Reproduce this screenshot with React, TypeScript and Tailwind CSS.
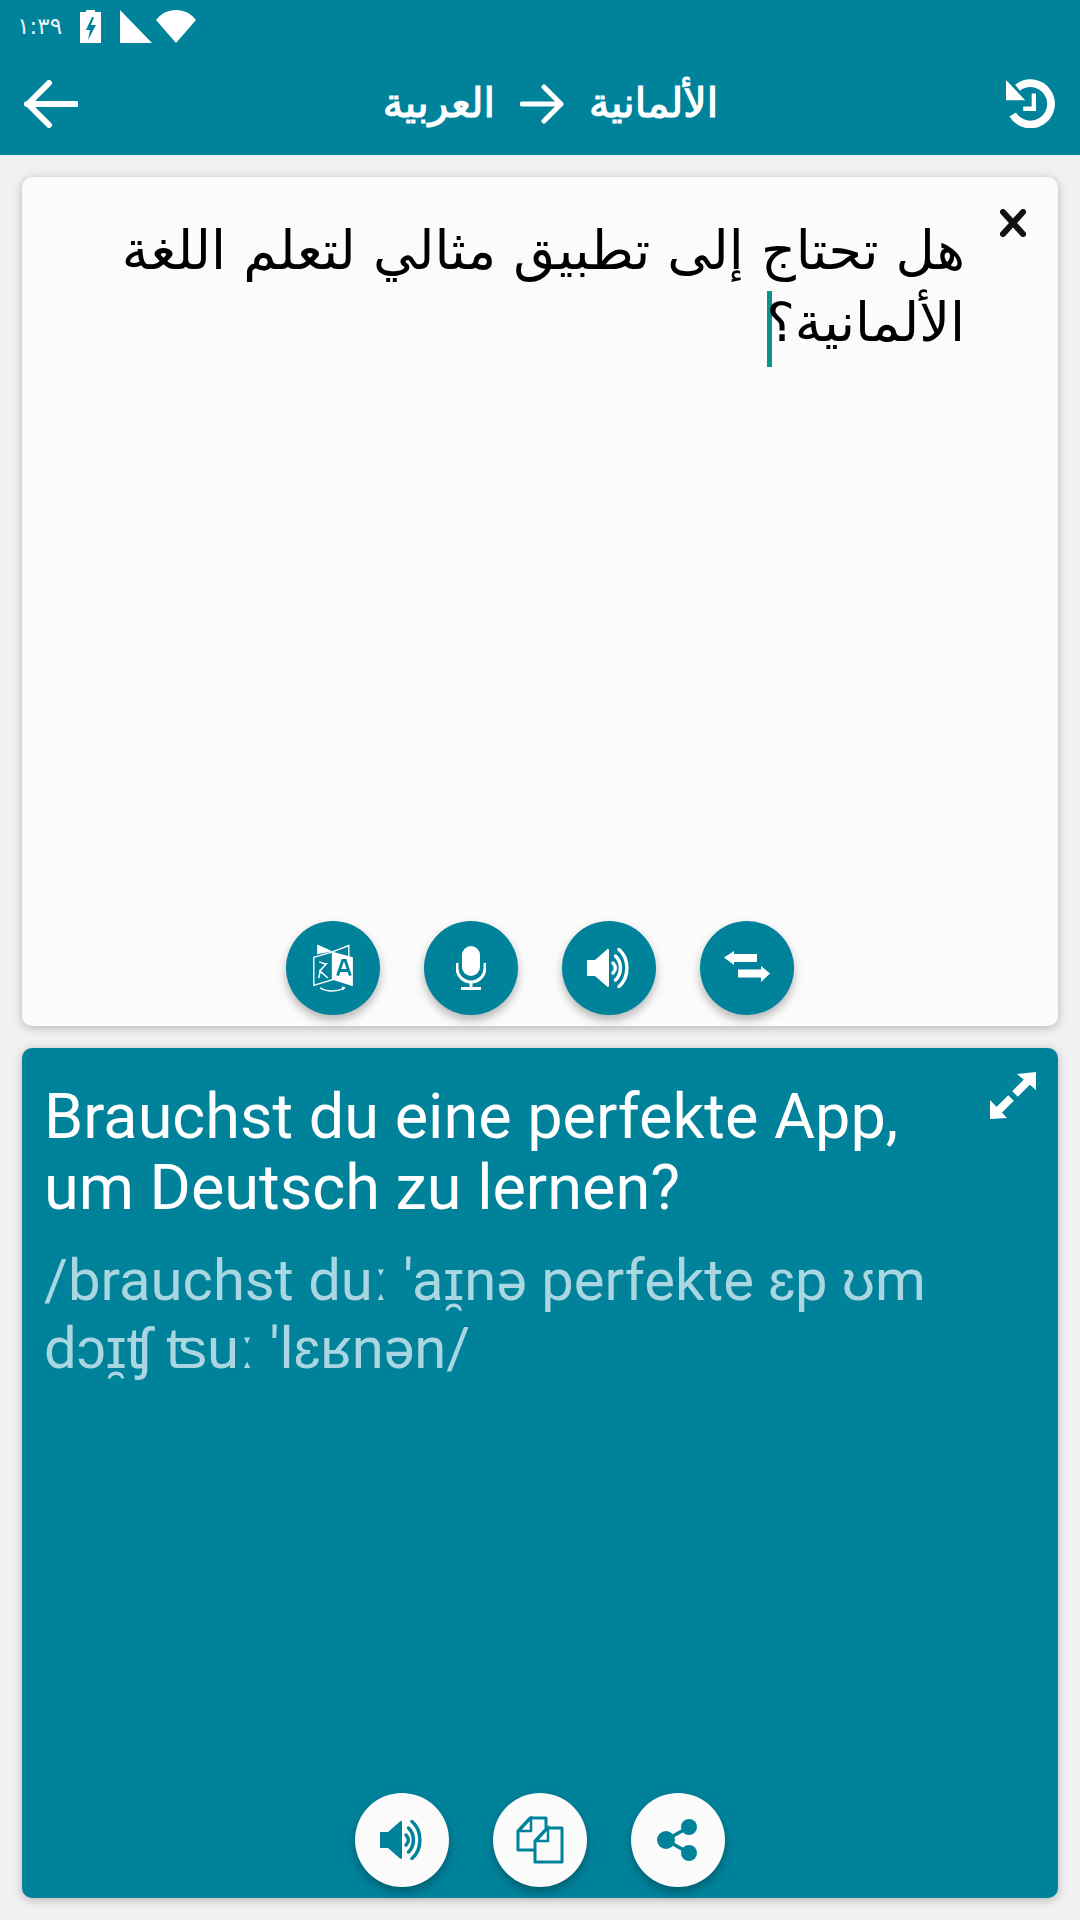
import React from "react";

const Speaker = ({ c }: { c: string }) => (
  <svg width="46" height="40" viewBox="0 0 46 40" fill="none">
    <path d="M1 12h8L21 1.500c1-.8 2-.3 2 1v35c0 1.300-1 1.800-2 1L9 28H1z" fill={c} />
    <path d="M27 15c3 3 3 7 0 10" stroke={c} strokeWidth="3.500" strokeLinecap="round" />
    <path d="M29.500 8c6.500 6 6.500 18 0 24" stroke={c} strokeWidth="3.500" strokeLinecap="round" />
    <path d="M33 1.500c10.500 9 10.500 28 0 37" stroke={c} strokeWidth="3.500" strokeLinecap="round" />
  </svg>
);

const Round = ({ light, children }: { light?: boolean; children: React.ReactNode }) => (
  <div
    className={`flex h-[94px] w-[94px] items-center justify-center rounded-full shadow-[0_5px_10px_rgba(0,0,0,0.28)] ${
      light ? "bg-[#fbfbfb]" : "bg-[#01829b]"
    }`}
  >
    {children}
  </div>
);

export default function App() {
  return (
    <div className="flex h-[1920px] w-[1080px] flex-col overflow-hidden bg-[#f1f1f1] font-['Roboto',sans-serif]">
      <header className="flex h-[155px] shrink-0 flex-col bg-[#01829b] text-white">
        <div className="flex h-[53px] items-center pl-[19px]">
          <span className="w-[43px] font-['DejaVu_Sans',sans-serif] text-[23px] leading-none text-[#e8f3f5]" dir="rtl">١:٣٩</span>
          <svg className="ml-[18px]" width="21" height="33" viewBox="0 0 21 33">
            <path fillRule="evenodd" d="M6 0h9v2h6v31H0V2h6zM12 7l-6 13h4l-2 10 8-15h-5l3-8z" fill="#fff" />
          </svg>
          <svg className="ml-[19px]" width="32" height="33" viewBox="0 0 32 33">
            <path d="M0 0l32 33H0z" fill="#fff" />
          </svg>
          <svg className="ml-[4px]" width="40" height="33" viewBox="0 0 40 33">
            <path d="M0 10C5 3.500 12 0 20 0S35 3.500 40 10L20 33z" fill="#fff" />
          </svg>
        </div>
        <div className="flex flex-1 items-center justify-between pb-[1px] pl-[24px] pr-[25px]">
          <svg width="54" height="48" viewBox="0 0 54 48" fill="none">
            <path d="M3 24h49M25 3L4 24l21 21" stroke="#fff" strokeWidth="6" strokeLinecap="round" strokeLinejoin="round" />
          </svg>
          <div className="ml-[18px] flex items-center gap-[25px] font-['DejaVu_Sans',sans-serif] text-[41px] leading-none [-webkit-text-stroke:1.2px_white]" dir="rtl">
            <span>الألمانية</span>
            <svg width="44" height="40" viewBox="0 0 44 40" fill="none">
              <path d="M2 20h39M24 3l17 17-17 17" stroke="#fff" strokeWidth="5" strokeLinecap="round" strokeLinejoin="round" />
            </svg>
            <span>العربية</span>
          </div>
          <svg width="50" height="49" viewBox="0 0 50 51" fill="none">
            <path d="M12 9A21.500 21.500 0 1 1 7 37" stroke="#fff" strokeWidth="8" />
            <path d="M0 1v21h20z" fill="#fff" />
            <path d="M29 15v16H18" stroke="#fff" strokeWidth="4.500" />
          </svg>
        </div>
      </header>

      <main className="flex flex-1 flex-col gap-[22px] px-[22px] pb-[22px] pt-[22px]">
        <section className="relative flex h-[849px] flex-col rounded-[10px] bg-[#fbfbfb] shadow-[0_2px_10px_rgba(0,0,0,0.25)]">
          <svg className="absolute right-[32px] top-[32px]" width="26" height="28" viewBox="0 0 26 28" fill="none">
            <path d="M3 3l20 22M23 3L3 25" stroke="#111" strokeWidth="6" strokeLinecap="round" />
          </svg>
          <div
            dir="rtl"
            className="flex-1 pl-[40px] pr-[93px] pt-[38px] font-['DejaVu_Sans',sans-serif] text-[54px] leading-[72px] text-black"
          >
            هل تحتاج إلى تطبيق مثالي لتعلم اللغة الألمانية؟
            <span className="mr-[-6px] inline-block h-[76px] w-[5px] bg-[#0d9488] align-[-26px]" />
          </div>
          <div className="flex justify-center gap-[44px] pb-[11px]">
            <Round>
              <svg width="40" height="50" viewBox="0 0 39 49" fill="none">
                <path d="M19.500 8.500L35 2.500V14" stroke="#fff" strokeWidth="1.300" />
                <path d="M4 1.500L19 8 4 11z" fill="#fff" />
                <path d="M.7 14L19 8.700V36L.7 41.500z" fill="#01829b" stroke="#fff" strokeWidth="1.300" />
                <path d="M19 8.500l20 5.500v28.500L19 36z" fill="#fff" />
                <path d="M24 32l5-15h2.500l5 15M26 27h8" stroke="#01829b" strokeWidth="2.800" />
                <path d="M6 18.500l5 1.800h2l-6.500 7 8 7M7 27.500l-1.500 7" stroke="#fff" strokeWidth="1.500" />
                <path d="M7 44c6 4 16 4 23 .5" stroke="#fff" strokeWidth="1.300" />
                <path d="M28 42.500l4 1-2.800 3z" fill="#fff" />
              </svg>
            </Round>
            <Round>
              <svg width="30" height="44" viewBox="0 0 30 44" fill="none">
                <rect x="6" y="0" width="18" height="30" rx="9" fill="#fff" />
                <path d="M1 17v5a14 14 0 0 0 28 0v-5M15 36v6M5 42.500h20" stroke="#fff" strokeWidth="3" />
              </svg>
            </Round>
            <Round>
              <Speaker c="#fff" />
            </Round>
            <Round>
              <svg className="mt-[-4px]" width="46" height="31" viewBox="0 0 46 31">
                <path d="M0 6.500L10 0v3h23v8H10v3zM46 22.500L37 31v-4.500H14v-8h23V15z" fill="#fff" />
              </svg>
            </Round>
          </div>
        </section>

        <section className="relative flex h-[850px] flex-col rounded-[10px] bg-[#01829b] shadow-[0_2px_10px_rgba(0,0,0,0.25)]">
          <svg className="absolute right-[22px] top-[24px]" width="46" height="47" viewBox="0 0 46 47" fill="none">
            <path d="M27 2L46 0v18z" fill="#fff" />
            <path d="M38 9L25 22" stroke="#fff" strokeWidth="8" />
            <path d="M0 47V28l17 18z" fill="#fff" />
            <path d="M8 39L21 26" stroke="#fff" strokeWidth="8" />
          </svg>
          <div className="flex-1 pl-[22px] pr-[100px] pt-[33px]">
            <p className="text-[63px] leading-[71px] text-white">Brauchst du eine perfekte App, um Deutsch zu lernen?</p>
            <p className="mt-[23px] text-[58px] leading-[68px] text-[#a9d6e0]">
              /brauchst duː 'aɪ̯nə perfekte ɛp ʊm dɔɪ̯ʧ ʦuː 'lɛʁnən/
            </p>
          </div>
          <div className="flex justify-center gap-[44px] pb-[11px]">
            <Round light>
              <Speaker c="#01829b" />
            </Round>
            <Round light>
              <svg width="48" height="48" viewBox="0 0 48 48" fill="none">
                <path d="M18 34H2V15L14 2h16v10" stroke="#01829b" strokeWidth="3" strokeLinejoin="round" />
                <path d="M3 15h12V2z" stroke="#01829b" strokeWidth="2.500" />
                <path d="M19 46V25l12-13h15v34z" fill="#fbfbfb" stroke="#01829b" strokeWidth="3" strokeLinejoin="round" />
                <path d="M20 25h12V12z" stroke="#01829b" strokeWidth="2.500" />
              </svg>
            </Round>
            <Round light>
              <svg width="42" height="42" viewBox="0 0 42 42">
                <circle cx="32" cy="8" r="8" fill="#01829b" />
                <circle cx="32" cy="34" r="8" fill="#01829b" />
                <circle cx="9" cy="21" r="9" fill="#01829b" />
                <path d="M9 21L32 8M9 21l23 13" stroke="#01829b" strokeWidth="3.500" />
              </svg>
            </Round>
          </div>
        </section>
      </main>
    </div>
  );
}
